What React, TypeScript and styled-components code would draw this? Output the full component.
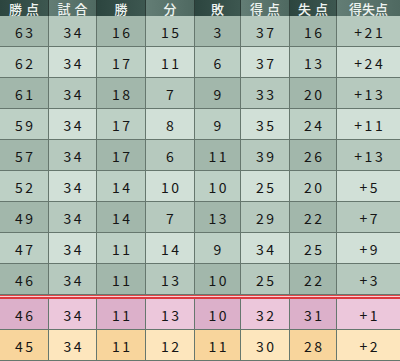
import styled, { createGlobalStyle } from "styled-components";

const GlobalStyle = createGlobalStyle`
  html, body { margin: 0; padding: 0; background: #fff; }
  body { width: 400px; height: 361px; overflow: hidden; }
`;

const columns = "49px 48px 49px 49px 46px 49px 47px 63px";

const headers = ["勝点", "試合", "勝", "分", "敗", "得点", "失点", "得失点"];

type Tone = "green" | "pink" | "orange";

const rows: { tone: Tone; values: string[] }[] = [
  { tone: "green", values: ["63", "34", "16", "15", "3", "37", "16", "+21"] },
  { tone: "green", values: ["62", "34", "17", "11", "6", "37", "13", "+24"] },
  { tone: "green", values: ["61", "34", "18", "7", "9", "33", "20", "+13"] },
  { tone: "green", values: ["59", "34", "17", "8", "9", "35", "24", "+11"] },
  { tone: "green", values: ["57", "34", "17", "6", "11", "39", "26", "+13"] },
  { tone: "green", values: ["52", "34", "14", "10", "10", "25", "20", "+5"] },
  { tone: "green", values: ["49", "34", "14", "7", "13", "29", "22", "+7"] },
  { tone: "green", values: ["47", "34", "11", "14", "9", "34", "25", "+9"] },
  { tone: "green", values: ["46", "34", "11", "13", "10", "25", "22", "+3"] },
  { tone: "pink", values: ["46", "34", "11", "13", "10", "32", "31", "+1"] },
  { tone: "orange", values: ["45", "34", "11", "12", "11", "30", "28", "+2"] },
];

const palette: Record<string, [string, string]> = {
  greenDark: ["#a2b7ab", "#b6c9be"],
  greenLight: ["#bdd0c5", "#d1e0d7"],
  pink: ["#dcb0ca", "#ecc7db"],
  orange: ["#f8d59c", "#fde6bd"],
};

export default function App() {
  return (
    <>
      <GlobalStyle />
      <Table>
        <HeaderRow>
          {headers.map((h, i) => (
            <HeadCell key={h} $alt={i % 2 === 1} $spaced={h.length === 2}>
              {h}
            </HeadCell>
          ))}
        </HeaderRow>
        {rows.map((row, r) => {
          const key =
            row.tone === "green" ? (r % 2 === 0 ? "greenDark" : "greenLight") : row.tone;
          return (
            <Group key={r}>
              {row.tone === "pink" && <Separator />}
              <Row>
                {row.values.map((v, c) => (
                  <Cell key={c} $bg={palette[key][c % 2]}>
                    {v}
                  </Cell>
                ))}
              </Row>
            </Group>
          );
        })}
      </Table>
    </>
  );
}

const Table = styled.div`
  width: 400px;
  display: flex;
  flex-direction: column;
`;

const HeaderRow = styled.div`
  display: grid;
  grid-template-columns: ${columns};
  height: 16px;
  background: #3a544d;
`;

const HeadCell = styled.div<{ $alt: boolean; $spaced: boolean }>`
  display: flex;
  align-items: center;
  justify-content: center;
  height: 16px;
  overflow: visible;
  background: ${(p) =>
    p.$alt
      ? "linear-gradient(90deg, #637d75, #4f6961)"
      : "linear-gradient(90deg, #2c453f, #3d5750)"};
  color: #eef3f0;
  font-family: "Noto Sans CJK JP", sans-serif;
  font-weight: 500;
  font-size: 13px;
  line-height: 1;
  letter-spacing: ${(p) => (p.$spaced ? "4px" : "0")};
  text-indent: ${(p) => (p.$spaced ? "4px" : "0")};
  border-right: 1px solid #2a3b36;
  &:last-child {
    border-right: none;
  }
`;

const Group = styled.div`
  display: flex;
  flex-direction: column;
`;

const Separator = styled.div`
  height: 4px;
  background: linear-gradient(
    180deg,
    #e2464a 0,
    #e2464a 1.5px,
    #f8d3d4 1.5px,
    #f8d3d4 2.5px,
    #dc3a40 2.5px,
    #dc3a40 4px
  );
`;

const Row = styled.div`
  display: grid;
  grid-template-columns: ${columns};
  height: 31px;
`;

const Cell = styled.div<{ $bg: string }>`
  display: flex;
  align-items: center;
  justify-content: center;
  background: ${(p) => p.$bg};
  border-right: 1px solid #66776e;
  border-bottom: 1px solid #66776e;
  color: #151515;
  font-family: "Noto Sans CJK JP", sans-serif;
  font-size: 14px;
  line-height: 1;
  letter-spacing: 2.5px;
  text-indent: 2.5px;
  padding-top: 1px;
  box-sizing: border-box;
  &:last-child {
    border-right: none;
  }
`;
